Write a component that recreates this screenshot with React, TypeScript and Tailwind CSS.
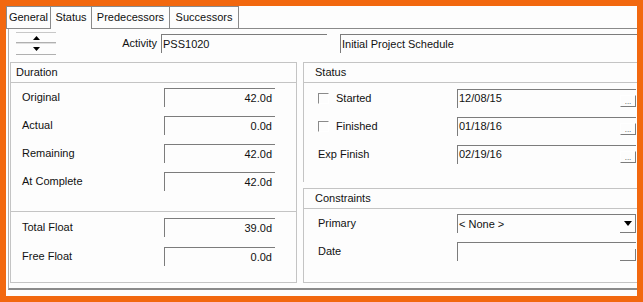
import React from "react";

const font = { fontFamily: '"Liberation Sans", Arial, sans-serif' };

function Field({ value, align = "right", w = "w-[111px]", button }: { value: string; align?: "left" | "right"; w?: string; button?: "dots" | "drop" | "blank" }) {
  return (
    <div className={`${w} h-[19px] flex items-stretch border-t border-l border-[#7c7c7c] bg-[#fdfdfd]`}>
      <div className={`flex-1 flex items-center text-[11px] text-[#111] leading-none ${align === "right" ? "justify-end pr-[3px]" : "justify-start pl-[1px]"}`}>{value}</div>
      {button === "dots" && (
        <div className="self-end w-[16px] h-[12px] mb-[1px] border-b border-r border-[#7c7c7c] border-t border-l border-t-white border-l-white flex items-end justify-center text-[8px] leading-[8px] text-[#444]">...</div>
      )}
      {button === "drop" && (
        <div className="w-[16px] border-b border-r border-[#7c7c7c] flex items-center justify-center">
          <svg width="8" height="5" viewBox="0 0 8 5"><path d="M0 0 H8 L4 5 Z" fill="#000" /></svg>
        </div>
      )}
      {button === "blank" && (
        <div className="self-end w-[16px] h-[12px] border-b border-r border-[#7c7c7c]"></div>
      )}
    </div>
  );
}

function Check() {
  return <div className="w-[11px] h-[11px] border-t border-l border-[#8a8a8a] border-b border-r border-b-white border-r-white"></div>;
}

export default function App() {
  const tabs = [
    { t: "General", w: "w-[45px] border-l" },
    { t: "Status", w: "w-[41px]", sel: true },
    { t: "Predecessors", w: "w-[78px]" },
    { t: "Successors", w: "w-[69px]" },
  ];
  return (
    <div className="w-[643px] h-[302px] bg-[#f2680f] p-[6px]" style={font}>
      <div className="w-[631px] h-[290px] bg-[#fdfdfd] flex flex-col">
        <div className="h-[23px] flex items-end border-b border-[#8a8a8a]">
          {tabs.map((tb) => (
            <div
              key={tb.t}
              className={`${tb.w} h-[22px] border-t border-r border-[#8a8a8a] flex items-center justify-center text-[11px] text-[#111] bg-[#fdfdfd] ${tb.sel ? "-mb-[1px] h-[23px] pb-[1px]" : ""}`}
            >
              {tb.t}
            </div>
          ))}
        </div>
        <div className="ml-[2px] h-[261px] border-l border-b-2 border-l-[#b0b0b0] border-b-[#8a8a8a] flex flex-col">
          <div className="h-[33px] flex items-start">
            <div className="ml-[7px] mt-[3px] w-[40px] h-[23px] flex flex-col">
              <div className="h-[11px] border-t border-b border-t-[#c8c8c8] border-b-[#b0b0b0] flex items-center justify-center">
                <svg width="7" height="4" viewBox="0 0 7 4"><path d="M3.5 0 L7 4 H0 Z" fill="#000" /></svg>
              </div>
              <div className="h-[12px] border-t border-b border-t-[#e0e0e0] border-b-[#b0b0b0] flex items-center justify-center">
                <svg width="7" height="4" viewBox="0 0 7 4"><path d="M0 0 H7 L3.5 4 Z" fill="#000" /></svg>
              </div>
            </div>
            <div className="w-[105px] mt-[5px] h-[19px] flex items-center justify-end pr-[4px] text-[11px] text-[#111]">Activity</div>
            <div className="mt-[5px]"><Field value="PSS1020" align="left" w="w-[166px]" /></div>
            <div className="mt-[5px] ml-[13px] flex-1"><Field value="Initial Project Schedule" align="left" w="w-full" /></div>
          </div>
          <div className="h-[221px] flex pl-[1px] gap-[6px]">
            <div className="w-[287px] flex flex-col">
              <div className="h-[149px] border-t border-l border-r border-[#c4c4c4] flex flex-col">
                <div className="h-[20px] border-b border-[#c4c4c4] flex items-center pl-[5px] text-[11px] text-[#111]">Duration</div>
                <div className="flex flex-col pt-[5px] gap-[9px]">
                  {[["Original", "42.0d"], ["Actual", "0.0d"], ["Remaining", "42.0d"], ["At Complete", "42.0d"]].map(([l, v]) => (
                    <div key={l} className="flex items-center h-[19px]">
                      <div className="w-[153px] pl-[11px] text-[11px] text-[#111]">{l}</div>
                      <Field value={v} />
                    </div>
                  ))}
                </div>
              </div>
              <div className="h-[72px] border border-[#c4c4c4] flex flex-col pt-[6px] gap-[10px]">
                {[["Total Float", "39.0d"], ["Free Float", "0.0d"]].map(([l, v]) => (
                  <div key={l} className="flex items-center h-[19px]">
                    <div className="w-[153px] pl-[11px] text-[11px] text-[#111]">{l}</div>
                    <Field value={v} />
                  </div>
                ))}
              </div>
            </div>
            <div className="flex-1 flex flex-col">
              <div className="h-[120px] border-t border-l border-[#c4c4c4] flex flex-col">
                <div className="h-[20px] border-b border-[#c4c4c4] flex items-center pl-[11px] text-[11px] text-[#111]">Status</div>
                <div className="flex flex-col pt-[6px] gap-[10px]">
                  {[["Started", "12/08/15", true], ["Finished", "01/18/16", true], ["Exp Finish", "02/19/16", false]].map(([l, v, c]) => (
                    <div key={l as string} className="flex items-center h-[18px]">
                      <div className="w-[153px] pl-[14px] flex items-center gap-[7px] text-[11px] text-[#111]">
                        {c ? <Check /> : null}
                        <span>{l as string}</span>
                      </div>
                      <Field value={v as string} align="left" w="w-[179px]" button="dots" />
                    </div>
                  ))}
                </div>
              </div>
              <div className="mt-[6px] h-[95px] border-t border-l border-b border-[#c4c4c4] flex flex-col">
                <div className="h-[20px] border-b border-[#c4c4c4] flex items-center pl-[11px] text-[11px] text-[#111]">Constraints</div>
                <div className="flex flex-col pt-[5px] gap-[9px]">
                  <div className="flex items-center h-[19px]">
                    <div className="w-[153px] pl-[14px] text-[11px] text-[#111]">Primary</div>
                    <Field value="< None >" align="left" w="w-[179px]" button="drop" />
                  </div>
                  <div className="flex items-center h-[19px]">
                    <div className="w-[153px] pl-[14px] text-[11px] text-[#111]">Date</div>
                    <Field value="" align="left" w="w-[179px]" button="blank" />
                  </div>
                </div>
              </div>
            </div>
          </div>
        </div>
      </div>
    </div>
  );
}
